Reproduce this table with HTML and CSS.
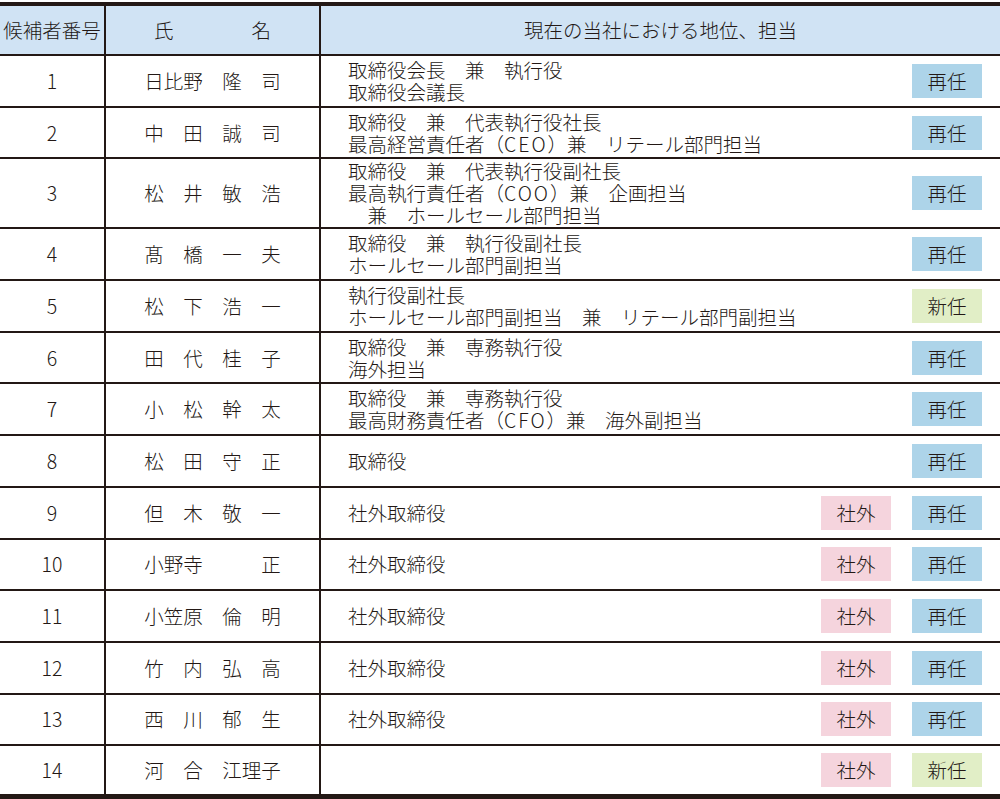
FILE: index.html
```html
<!DOCTYPE html>
<html lang="ja">
<head>
<meta charset="utf-8">
<title>取締役候補者一覧</title>
<link rel="stylesheet" href="styles.css">
</head>
<body>
<div class="table">
  <div class="row head">
    <div class="cell num">候補者番号</div>
    <div class="cell name">氏　　　　名</div>
    <div class="cell pos center">現在の当社における地位、担当</div>
  </div>

  <div class="row">
    <div class="cell num">1</div>
    <div class="cell name">日比野　隆　司</div>
    <div class="cell pos"><div class="txt">取締役会長　兼　執行役<br>取締役会議長</div><div class="badges"><span class="badge re">再任</span></div></div>
  </div>
  <div class="row">
    <div class="cell num">2</div>
    <div class="cell name">中　田　誠　司</div>
    <div class="cell pos"><div class="txt">取締役　兼　代表執行役社長<br>最高経営責任者（<span class="lat">CEO</span>）兼　リテール部門担当</div><div class="badges"><span class="badge re">再任</span></div></div>
  </div>
  <div class="row tall">
    <div class="cell num">3</div>
    <div class="cell name">松　井　敏　浩</div>
    <div class="cell pos"><div class="txt">取締役　兼　代表執行役副社長<br>最高執行責任者（<span class="lat">COO</span>）兼　企画担当<br>　兼　ホールセール部門担当</div><div class="badges"><span class="badge re">再任</span></div></div>
  </div>
  <div class="row">
    <div class="cell num">4</div>
    <div class="cell name">髙　橋　一　夫</div>
    <div class="cell pos"><div class="txt">取締役　兼　執行役副社長<br>ホールセール部門副担当</div><div class="badges"><span class="badge re">再任</span></div></div>
  </div>
  <div class="row">
    <div class="cell num">5</div>
    <div class="cell name">松　下　浩　一</div>
    <div class="cell pos"><div class="txt">執行役副社長<br>ホールセール部門副担当　兼　リテール部門副担当</div><div class="badges"><span class="badge new">新任</span></div></div>
  </div>
  <div class="row">
    <div class="cell num">6</div>
    <div class="cell name">田　代　桂　子</div>
    <div class="cell pos"><div class="txt">取締役　兼　専務執行役<br>海外担当</div><div class="badges"><span class="badge re">再任</span></div></div>
  </div>
  <div class="row">
    <div class="cell num">7</div>
    <div class="cell name">小　松　幹　太</div>
    <div class="cell pos"><div class="txt">取締役　兼　専務執行役<br>最高財務責任者（<span class="lat">CFO</span>）兼　海外副担当</div><div class="badges"><span class="badge re">再任</span></div></div>
  </div>
  <div class="row">
    <div class="cell num">8</div>
    <div class="cell name">松　田　守　正</div>
    <div class="cell pos"><div class="txt">取締役</div><div class="badges"><span class="badge re">再任</span></div></div>
  </div>
  <div class="row">
    <div class="cell num">9</div>
    <div class="cell name">但　木　敬　一</div>
    <div class="cell pos"><div class="txt">社外取締役</div><div class="badges"><span class="badge out">社外</span><span class="badge re">再任</span></div></div>
  </div>
  <div class="row">
    <div class="cell num">10</div>
    <div class="cell name">小野寺　　　正</div>
    <div class="cell pos"><div class="txt">社外取締役</div><div class="badges"><span class="badge out">社外</span><span class="badge re">再任</span></div></div>
  </div>
  <div class="row">
    <div class="cell num">11</div>
    <div class="cell name">小笠原　倫　明</div>
    <div class="cell pos"><div class="txt">社外取締役</div><div class="badges"><span class="badge out">社外</span><span class="badge re">再任</span></div></div>
  </div>
  <div class="row">
    <div class="cell num">12</div>
    <div class="cell name">竹　内　弘　高</div>
    <div class="cell pos"><div class="txt">社外取締役</div><div class="badges"><span class="badge out">社外</span><span class="badge re">再任</span></div></div>
  </div>
  <div class="row">
    <div class="cell num">13</div>
    <div class="cell name">西　川　郁　生</div>
    <div class="cell pos"><div class="txt">社外取締役</div><div class="badges"><span class="badge out">社外</span><span class="badge re">再任</span></div></div>
  </div>
  <div class="row last">
    <div class="cell num">14</div>
    <div class="cell name">河　合　江理子</div>
    <div class="cell pos"><div class="txt"></div><div class="badges"><span class="badge out">社外</span><span class="badge new">新任</span></div></div>
  </div>
</div>
</body>
</html>
```

FILE: styles.css
```css
html, body {
  margin: 0;
  padding: 0;
  background: #ffffff;
}
body {
  padding-top: 2px;
  font-family: "Noto Sans CJK JP", "Noto Sans", sans-serif;
  font-weight: 300;
  font-size: 19.5px;
  color: #231815;
}
.table {
  width: 1000px;
  border-top: 4px solid #231815;
  border-bottom: 6px solid #231815;
}
.row {
  display: grid;
  grid-template-columns: 104px 215px 1fr;
  box-sizing: border-box;
  height: 51.7px;
  border-bottom: 2px solid #231815;
}
.row.head {
  height: 50px;
  background: #d0e3f4;
}
.row.tall {
  height: 70px;
}
.row.last {
  height: 48px;
  border-bottom: none;
}
.cell {
  display: flex;
  align-items: center;
  line-height: 22px;
  white-space: nowrap;
}
.num {
  justify-content: center;
}
.name {
  justify-content: center;
  border-left: 2px solid #231815;
}
.pos {
  border-left: 2px solid #231815;
  padding-left: 27px;
  padding-right: 18px;
  justify-content: space-between;
}
.pos.center {
  justify-content: center;
  padding: 0;
}
.lat {
  letter-spacing: 2px;
}
.badges {
  display: flex;
  gap: 21px;
}
.badge {
  width: 70px;
  height: 34px;
  display: flex;
  align-items: center;
  justify-content: center;
}
.badge.re {
  background: #add4e9;
}
.badge.new {
  background: #e1eec6;
}
.badge.out {
  background: #f5d4dd;
}
```
